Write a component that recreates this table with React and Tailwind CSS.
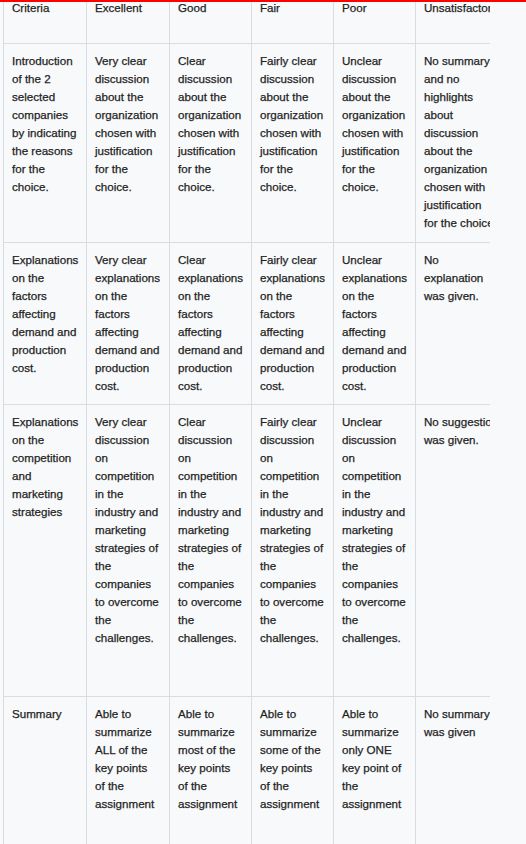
const columns = ['Criteria', 'Excellent', 'Good', 'Fair', 'Poor', 'Unsatisfactory'];

// \u00a0 keeps a few word groups together so the lines break as in the original table
const rows = [
  {
    height: 'h-[199px]',
    cells: [
      'Introduction of the 2 selected companies by indicating the reasons for the choice.',
      'Very clear discussion about the organization chosen with justification for the choice.',
      'Clear discussion about the organization chosen with justification for the choice.',
      'Fairly clear discussion about the organization chosen with justification for the choice.',
      'Unclear discussion about the organization chosen with justification for the choice.',
      'No summary and no highlights about discussion about the organization chosen with justification for\u00a0the\u00a0choice.',
    ],
  },
  {
    height: 'h-[162px]',
    cells: [
      'Explanations on the factors affecting demand and production cost.',
      'Very clear explanations on the factors affecting demand and production cost.',
      'Clear explanations on the factors affecting demand and production cost.',
      'Fairly clear explanations on the factors affecting demand and production cost.',
      'Unclear explanations on the factors affecting demand and production cost.',
      'No explanation was given.',
    ],
  },
  {
    height: 'h-[292px]',
    cells: [
      'Explanations on the competition and marketing strategies',
      'Very clear discussion on competition in the industry and marketing strategies of the companies to overcome the challenges.',
      'Clear discussion on competition in the industry and marketing strategies of the companies to overcome the challenges.',
      'Fairly clear discussion on competition in the industry and marketing strategies of the companies to overcome the challenges.',
      'Unclear discussion on competition in the industry and marketing strategies of the companies to overcome the challenges.',
      'No\u00a0suggestion was given.',
    ],
  },
  {
    height: 'h-[200px]',
    cells: [
      'Summary',
      'Able to summarize ALL of the key points of\u00a0the assignment',
      'Able to summarize most of the key points of the assignment',
      'Able to summarize some of the key points of the assignment',
      'Able to summarize only ONE key point of the assignment',
      'No summary was given',
    ],
  },
];

export default function App() {
  return (
    <div className="relative h-[844px] w-full overflow-hidden bg-[#f8f9fa] font-['Liberation_Sans',Arial,sans-serif] text-[11.6px] leading-[18px] text-[#1f1f1f] [-webkit-text-stroke:0.25px_#1f1f1f]">
      {/* Top accent bar */}
      <div className="absolute left-0 right-0 top-0 z-10 h-[1.5px] bg-[#ff0000]" />

      <div className="w-[490px] overflow-hidden">
        <table className="ml-[3px] w-[500px] table-fixed border-collapse">
          <colgroup>
            <col className="w-[83px]" />
            <col className="w-[83px]" />
            <col className="w-[82px]" />
            <col className="w-[82px]" />
            <col className="w-[82px]" />
            <col className="w-[88px]" />
          </colgroup>
          <thead>
            <tr className="h-[43px]">
              {columns.map((col) => (
                <th
                  key={col}
                  className="whitespace-nowrap overflow-hidden border border-t-0 border-[#dadce0] px-[8px] pt-0 pb-0 text-left align-top font-normal"
                >
                  <div className="-mt-px">{col}</div>
                </th>
              ))}
            </tr>
          </thead>
          <tbody>
            {rows.map((row, i) => (
              <tr key={i} className={row.height}>
                {row.cells.map((cell, j) => (
                  <td
                    key={j}
                    className="overflow-hidden border border-[#dadce0] px-[8px] pt-[8px] pb-[9px] align-top"
                  >
                    {cell}
                  </td>
                ))}
              </tr>
            ))}
          </tbody>
        </table>
      </div>
    </div>
  );
}
